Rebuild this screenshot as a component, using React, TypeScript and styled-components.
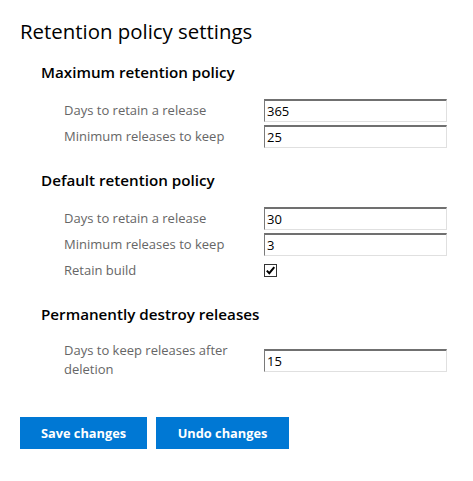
import { createGlobalStyle, styled } from 'styled-components'

const GlobalStyle = createGlobalStyle`
  body {
    margin: 0;
    background: #fff;
    font-family: 'Open Sans', 'Noto Sans', sans-serif;
    color: #000;
  }
`

const Page = styled.div`
  padding: 17px 19px 30px 20px;
`

const Title = styled.h1`
  margin: 0;
  font-size: 20.4px;
  font-weight: 400;
  line-height: 28px;
`

const Section = styled.section`
  padding-left: 21px;
  margin-top: 22px;

  &:first-of-type {
    margin-top: 17px;
  }
`

const SectionTitle = styled.h2`
  margin: 0 0 17px;
  font-size: 15.2px;
  font-weight: 600;
  line-height: 20px;
`

const Rows = styled.div`
  display: flex;
  flex-direction: column;
  gap: 3px;
  padding-left: 23px;
`

const Row = styled.div`
  display: grid;
  grid-template-columns: 200px 183px;
  align-items: center;
  min-height: 23px;
`

const Label = styled.label`
  font-size: 13px;
  line-height: 19px;
  color: #666;
  max-width: 180px;
`

const TextInput = styled.input`
  box-sizing: border-box;
  width: 183px;
  height: 23px;
  margin: 0;
  padding: 0 0 0 2px;
  border-style: solid;
  border-width: 2px 1px 1px 1px;
  border-color: #707070 #e0e0e0 #e0e0e0 #7a7a7a;
  font-family: 'Open Sans', 'Noto Sans', sans-serif;
  font-size: 13px;
  color: #000;
  outline: none;
`

const Check = styled.span`
  box-sizing: border-box;
  display: inline-flex;
  align-items: center;
  justify-content: center;
  width: 13px;
  height: 13px;
  border: 1px solid #333;
  background: #fff;
`

const Buttons = styled.div`
  display: flex;
  gap: 9px;
  margin-top: 38px;
`

const Button = styled.button<{ $width: number }>`
  width: ${(p) => p.$width}px;
  height: 32px;
  border: none;
  background: #0078d4;
  color: #fff;
  font-family: 'Open Sans', 'Noto Sans', sans-serif;
  font-size: 12.8px;
  font-weight: 700;
  cursor: pointer;
`

const CheckMark = () => (
  <Check>
    <svg width="11" height="11" viewBox="0 0 11 11">
      <path d="M1.8 5.6 L4.3 8.2 L9.3 2.2" fill="none" stroke="#000" strokeWidth="2" />
    </svg>
  </Check>
)

export default function App() {
  return (
    <>
      <GlobalStyle />
      <Page>
        <Title>Retention policy settings</Title>

        <Section>
          <SectionTitle>Maximum retention policy</SectionTitle>
          <Rows>
            <Row>
              <Label>Days to retain a release</Label>
              <TextInput defaultValue="365" />
            </Row>
            <Row>
              <Label>Minimum releases to keep</Label>
              <TextInput defaultValue="25" />
            </Row>
          </Rows>
        </Section>

        <Section>
          <SectionTitle>Default retention policy</SectionTitle>
          <Rows>
            <Row>
              <Label>Days to retain a release</Label>
              <TextInput defaultValue="30" />
            </Row>
            <Row>
              <Label>Minimum releases to keep</Label>
              <TextInput defaultValue="3" />
            </Row>
            <Row>
              <Label>Retain build</Label>
              <CheckMark />
            </Row>
          </Rows>
        </Section>

        <Section>
          <SectionTitle>Permanently destroy releases</SectionTitle>
          <Rows>
            <Row>
              <Label>Days to keep releases after deletion</Label>
              <TextInput defaultValue="15" />
            </Row>
          </Rows>
        </Section>

        <Buttons>
          <Button $width={127}>Save changes</Button>
          <Button $width={133}>Undo changes</Button>
        </Buttons>
      </Page>
    </>
  )
}
